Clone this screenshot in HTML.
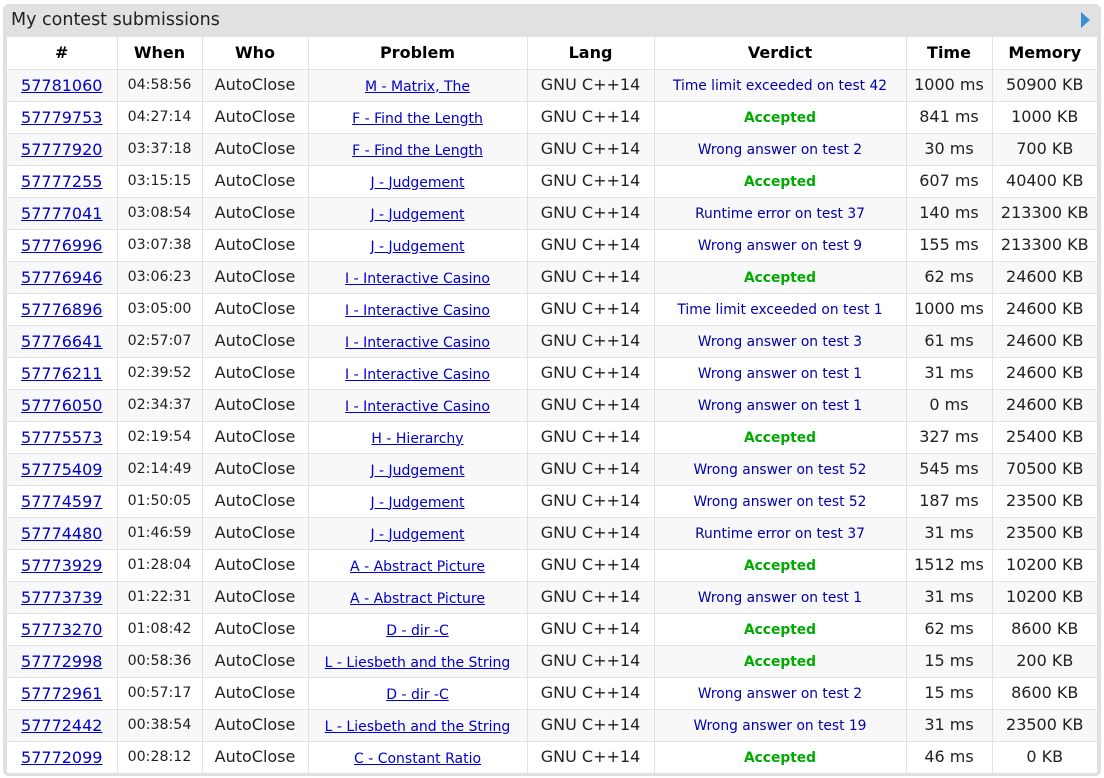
<!DOCTYPE html>
<html><head><meta charset="utf-8"><style>
body{margin:0;background:#fff;font-family:"DejaVu Sans","Liberation Sans",sans-serif;}
.box{position:absolute;left:3px;top:4px;width:1098px;height:772px;background:#e1e1e1;border-radius:6px;}
.title{position:absolute;left:11px;top:10px;font-size:17.5px;color:#222;}
.arr{position:absolute;left:1081px;top:12px;width:0;height:0;border-top:8px solid transparent;border-bottom:8px solid transparent;border-left:9px solid #3b8fd6;}
table{position:absolute;left:7px;top:37px;border-collapse:collapse;table-layout:fixed;width:1090px;background:#fff;}
tr{height:32px;}
td,th{border:1px solid #e1e1e1;height:31px;line-height:18px;padding:0;text-align:center;white-space:nowrap;overflow:hidden;color:#222;}
th{font-size:16px;font-weight:bold;color:#000;}
tr:nth-child(even) td{background:#f8f8f8;}
tr td:first-child,tr th:first-child{border-left:none}
tr td:last-child,tr th:last-child{border-right:none}
tr:first-child th{border-top:none}
td a,td{position:relative;}
td.id a{color:#00c;font-size:16px;text-decoration:underline;top:1px;}
td.w{font-size:14.2px;}
td.who{font-size:16px;}
td.p a{color:#00c;font-size:14px;text-decoration:underline;top:1px;}
td.l{font-size:16px;}
td.v{font-size:13.8px;color:#00a;}
td.v span{position:relative;top:1px;}
td.v.ok{color:#0a0;font-weight:bold;}
td.t,td.m{font-size:16px;}
</style></head><body>
<div class="box"></div>
<div class="title">My contest submissions</div>
<div class="arr"></div>
<table>
<colgroup><col style="width:110px"><col style="width:85px"><col style="width:106px"><col style="width:219px"><col style="width:127px"><col style="width:252px"><col style="width:86px"><col style="width:105px"></colgroup>
<tr><th>#</th><th>When</th><th>Who</th><th>Problem</th><th>Lang</th><th>Verdict</th><th>Time</th><th>Memory</th></tr>
<tr><td class="id"><a>57781060</a></td><td class="w">04:58:56</td><td class="who">AutoClose</td><td class="p"><a>M - Matrix, The</a></td><td class="l">GNU C++14</td><td class="v"><span>Time limit exceeded on test 42</span></td><td class="t">1000 ms</td><td class="m">50900 KB</td></tr>
<tr><td class="id"><a>57779753</a></td><td class="w">04:27:14</td><td class="who">AutoClose</td><td class="p"><a>F - Find the Length</a></td><td class="l">GNU C++14</td><td class="v ok"><span>Accepted</span></td><td class="t">841 ms</td><td class="m">1000 KB</td></tr>
<tr><td class="id"><a>57777920</a></td><td class="w">03:37:18</td><td class="who">AutoClose</td><td class="p"><a>F - Find the Length</a></td><td class="l">GNU C++14</td><td class="v"><span>Wrong answer on test 2</span></td><td class="t">30 ms</td><td class="m">700 KB</td></tr>
<tr><td class="id"><a>57777255</a></td><td class="w">03:15:15</td><td class="who">AutoClose</td><td class="p"><a>J - Judgement</a></td><td class="l">GNU C++14</td><td class="v ok"><span>Accepted</span></td><td class="t">607 ms</td><td class="m">40400 KB</td></tr>
<tr><td class="id"><a>57777041</a></td><td class="w">03:08:54</td><td class="who">AutoClose</td><td class="p"><a>J - Judgement</a></td><td class="l">GNU C++14</td><td class="v"><span>Runtime error on test 37</span></td><td class="t">140 ms</td><td class="m">213300 KB</td></tr>
<tr><td class="id"><a>57776996</a></td><td class="w">03:07:38</td><td class="who">AutoClose</td><td class="p"><a>J - Judgement</a></td><td class="l">GNU C++14</td><td class="v"><span>Wrong answer on test 9</span></td><td class="t">155 ms</td><td class="m">213300 KB</td></tr>
<tr><td class="id"><a>57776946</a></td><td class="w">03:06:23</td><td class="who">AutoClose</td><td class="p"><a>I - Interactive Casino</a></td><td class="l">GNU C++14</td><td class="v ok"><span>Accepted</span></td><td class="t">62 ms</td><td class="m">24600 KB</td></tr>
<tr><td class="id"><a>57776896</a></td><td class="w">03:05:00</td><td class="who">AutoClose</td><td class="p"><a>I - Interactive Casino</a></td><td class="l">GNU C++14</td><td class="v"><span>Time limit exceeded on test 1</span></td><td class="t">1000 ms</td><td class="m">24600 KB</td></tr>
<tr><td class="id"><a>57776641</a></td><td class="w">02:57:07</td><td class="who">AutoClose</td><td class="p"><a>I - Interactive Casino</a></td><td class="l">GNU C++14</td><td class="v"><span>Wrong answer on test 3</span></td><td class="t">61 ms</td><td class="m">24600 KB</td></tr>
<tr><td class="id"><a>57776211</a></td><td class="w">02:39:52</td><td class="who">AutoClose</td><td class="p"><a>I - Interactive Casino</a></td><td class="l">GNU C++14</td><td class="v"><span>Wrong answer on test 1</span></td><td class="t">31 ms</td><td class="m">24600 KB</td></tr>
<tr><td class="id"><a>57776050</a></td><td class="w">02:34:37</td><td class="who">AutoClose</td><td class="p"><a>I - Interactive Casino</a></td><td class="l">GNU C++14</td><td class="v"><span>Wrong answer on test 1</span></td><td class="t">0 ms</td><td class="m">24600 KB</td></tr>
<tr><td class="id"><a>57775573</a></td><td class="w">02:19:54</td><td class="who">AutoClose</td><td class="p"><a>H - Hierarchy</a></td><td class="l">GNU C++14</td><td class="v ok"><span>Accepted</span></td><td class="t">327 ms</td><td class="m">25400 KB</td></tr>
<tr><td class="id"><a>57775409</a></td><td class="w">02:14:49</td><td class="who">AutoClose</td><td class="p"><a>J - Judgement</a></td><td class="l">GNU C++14</td><td class="v"><span>Wrong answer on test 52</span></td><td class="t">545 ms</td><td class="m">70500 KB</td></tr>
<tr><td class="id"><a>57774597</a></td><td class="w">01:50:05</td><td class="who">AutoClose</td><td class="p"><a>J - Judgement</a></td><td class="l">GNU C++14</td><td class="v"><span>Wrong answer on test 52</span></td><td class="t">187 ms</td><td class="m">23500 KB</td></tr>
<tr><td class="id"><a>57774480</a></td><td class="w">01:46:59</td><td class="who">AutoClose</td><td class="p"><a>J - Judgement</a></td><td class="l">GNU C++14</td><td class="v"><span>Runtime error on test 37</span></td><td class="t">31 ms</td><td class="m">23500 KB</td></tr>
<tr><td class="id"><a>57773929</a></td><td class="w">01:28:04</td><td class="who">AutoClose</td><td class="p"><a>A - Abstract Picture</a></td><td class="l">GNU C++14</td><td class="v ok"><span>Accepted</span></td><td class="t">1512 ms</td><td class="m">10200 KB</td></tr>
<tr><td class="id"><a>57773739</a></td><td class="w">01:22:31</td><td class="who">AutoClose</td><td class="p"><a>A - Abstract Picture</a></td><td class="l">GNU C++14</td><td class="v"><span>Wrong answer on test 1</span></td><td class="t">31 ms</td><td class="m">10200 KB</td></tr>
<tr><td class="id"><a>57773270</a></td><td class="w">01:08:42</td><td class="who">AutoClose</td><td class="p"><a>D - dir -C</a></td><td class="l">GNU C++14</td><td class="v ok"><span>Accepted</span></td><td class="t">62 ms</td><td class="m">8600 KB</td></tr>
<tr><td class="id"><a>57772998</a></td><td class="w">00:58:36</td><td class="who">AutoClose</td><td class="p"><a>L - Liesbeth and the String</a></td><td class="l">GNU C++14</td><td class="v ok"><span>Accepted</span></td><td class="t">15 ms</td><td class="m">200 KB</td></tr>
<tr><td class="id"><a>57772961</a></td><td class="w">00:57:17</td><td class="who">AutoClose</td><td class="p"><a>D - dir -C</a></td><td class="l">GNU C++14</td><td class="v"><span>Wrong answer on test 2</span></td><td class="t">15 ms</td><td class="m">8600 KB</td></tr>
<tr><td class="id"><a>57772442</a></td><td class="w">00:38:54</td><td class="who">AutoClose</td><td class="p"><a>L - Liesbeth and the String</a></td><td class="l">GNU C++14</td><td class="v"><span>Wrong answer on test 19</span></td><td class="t">31 ms</td><td class="m">23500 KB</td></tr>
<tr><td class="id"><a>57772099</a></td><td class="w">00:28:12</td><td class="who">AutoClose</td><td class="p"><a>C - Constant Ratio</a></td><td class="l">GNU C++14</td><td class="v ok"><span>Accepted</span></td><td class="t">46 ms</td><td class="m">0 KB</td></tr>
</table>
</body></html>
